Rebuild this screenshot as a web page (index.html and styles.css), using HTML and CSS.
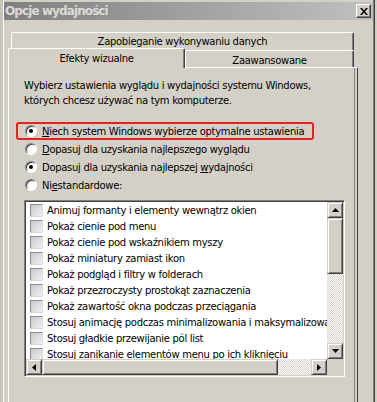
FILE: index.html
```html
<!DOCTYPE html>
<html lang="pl">
<head>
    <meta charset="UTF-8">
    <meta name="viewport" content="width=device-width, initial-scale=1.0">
    <title>Opcje wydajności</title>
    <link rel="stylesheet" href="styles.css">
</head>
<body>
    <div class="window">
        <div class="titlebar">
            <span class="title">Opcje wydajności</span>
            <span class="close-btn">
                <svg width="8" height="7" viewBox="0 0 8 7">
                    <path d="M0 0h2l2 2.5 2-2.5h2l-3 3.5 3 3.5h-2l-2-2.5-2 2.5h-2l3-3.5z" fill="#000"/>
                </svg>
            </span>
        </div>

        <div class="tabs">
            <div class="tab-row back">
                <div class="tab wide">Zapobieganie wykonywaniu danych</div>
            </div>
            <div class="tab-row front">
                <div class="tab active">Efekty wizualne</div>
                <div class="tab other">Zaawansowane</div>
            </div>
        </div>

        <div class="panel">
            <p class="intro">Wybierz ustawienia wyglądu i wydajności systemu Windows,<br>których chcesz używać na tym komputerze.</p>

            <div class="radios">
                <div class="radio marked"><span class="radio-dot on"></span><span><u>N</u>iech system Windows wybierze optymalne ustawienia</span></div>
                <div class="radio"><span class="radio-dot"></span><span><u>D</u>opasuj dla uzyskania najlepszego wyglądu</span></div>
                <div class="radio"><span class="radio-dot on"></span><span>Dopasuj dla uzyskania najlepszej <u>w</u>ydajności</span></div>
                <div class="radio"><span class="radio-dot"></span><span>Ni<u>e</u>standardowe:</span></div>
            </div>

            <div class="listbox">
                <div class="items">
                    <div class="item"><span class="check"></span>Animuj formanty i elementy wewnątrz okien</div>
                    <div class="item"><span class="check"></span>Pokaż cienie pod menu</div>
                    <div class="item"><span class="check"></span>Pokaż cienie pod wskaźnikiem myszy</div>
                    <div class="item"><span class="check"></span>Pokaż miniatury zamiast ikon</div>
                    <div class="item"><span class="check"></span>Pokaż podgląd i filtry w folderach</div>
                    <div class="item"><span class="check"></span>Pokaż przezroczysty prostokąt zaznaczenia</div>
                    <div class="item"><span class="check"></span>Pokaż zawartość okna podczas przeciągania</div>
                    <div class="item"><span class="check"></span>Stosuj animację podczas minimalizowania i maksymalizowania okien</div>
                    <div class="item"><span class="check"></span>Stosuj gładkie przewijanie pól list</div>
                    <div class="item"><span class="check"></span>Stosuj zanikanie elementów menu po ich kliknięciu</div>
                </div>

                <div class="vscroll">
                    <div class="sb-btn">
                        <svg width="7" height="4" viewBox="0 0 7 4"><path d="M3.5 0L7 4H0z" fill="#000"/></svg>
                    </div>
                    <div class="sb-thumb v"></div>
                    <div class="sb-track"></div>
                    <div class="sb-btn">
                        <svg width="7" height="4" viewBox="0 0 7 4"><path d="M0 0h7L3.5 4z" fill="#000"/></svg>
                    </div>
                </div>

                <div class="hscroll">
                    <div class="sb-btn">
                        <svg width="4" height="7" viewBox="0 0 4 7"><path d="M4 0v7L0 3.5z" fill="#000"/></svg>
                    </div>
                    <div class="sb-thumb h"></div>
                    <div class="sb-track"></div>
                    <div class="sb-btn">
                        <svg width="4" height="7" viewBox="0 0 4 7"><path d="M0 0l4 3.5L0 7z" fill="#000"/></svg>
                    </div>
                </div>

                <div class="corner"></div>
            </div>
        </div>
    </div>
</body>
</html>
```

FILE: styles.css
```css
* {
    margin: 0;
    padding: 0;
    box-sizing: border-box;
}

html, body {
    width: 377px;
    height: 402px;
    overflow: hidden;
}

body {
    background: #d4d0c8;
    font-family: "DejaVu Sans", sans-serif;
    font-size: 10px;
    letter-spacing: -0.3px;
    color: #000;
}

.window {
    height: 402px;
    padding-top: 2px;
    background: #d4d0c8;
    box-shadow:
        inset 3px 0 #c8c4bc,
        inset 4px 0 #ffffff,
        inset -2px 0 #d4d0c8,
        inset -3px 0 #404040,
        inset -4px 0 #808080;
}

/* Title bar */
.titlebar {
    height: 18px;
    margin: 0 4px;
    display: flex;
    align-items: center;
    justify-content: space-between;
    background: linear-gradient(90deg, #808080, #c0c0c0);
}

.title {
    padding-left: 1px;
    font-weight: bold;
    font-size: 12px;
    letter-spacing: -0.9px;
    color: #dcdad6;
}

.close-btn {
    width: 15px;
    height: 14px;
    margin-right: 2px;
    display: flex;
    align-items: center;
    justify-content: center;
    background: #d4d0c8;
    border: 1px solid;
    border-color: #ffffff #404040 #404040 #ffffff;
    box-shadow: inset -1px -1px #808080;
}

/* Tabs */
.tabs {
    margin: 12px 23px 0 8px;
}

.tab-row {
    display: flex;
}

.tab-row.back {
    padding-left: 3px;
}

.tab-row.front {
    margin-top: -2px;
    align-items: flex-start;
}

.tab {
    display: flex;
    align-items: center;
    justify-content: center;
    background: #d4d0c8;
    border-top: 1px solid #ffffff;
    border-left: 1px solid #ffffff;
    border-right: 1px solid #404040;
    border-radius: 2px 2px 0 0;
    box-shadow: inset -1px 0 #808080;
    white-space: nowrap;
}

.tab.wide {
    flex: 1;
    height: 18px;
}

.tab.active {
    position: relative;
    z-index: 2;
    width: 177px;
    height: 20px;
    padding-bottom: 1px;
}

.tab.other {
    flex: 1;
    height: 17px;
    margin-top: 2px;
    padding-top: 3px;
}

/* Panel */
.panel {
    width: 350px;
    height: 340px;
    margin: -1px 0 0 8px;
    padding: 10px 0 0 15px;
    border-top: 1px solid #ffffff;
    border-left: 1px solid #ffffff;
    border-right: 1px solid #404040;
    box-shadow: inset -2px 0 #d4d0c8, inset -3px 0 #808080;
}

.intro {
    line-height: 15px;
}

.radios {
    margin-top: 14px;
}

.radio {
    height: 18px;
    padding-left: 1px;
    display: flex;
    align-items: center;
    gap: 5px;
    white-space: nowrap;
}

.radio.marked {
    width: 298px;
    margin-left: -8px;
    padding-left: 7px;
    border: 2px solid #e2231e;
    border-radius: 3px;
}

.radio-dot {
    width: 12px;
    height: 12px;
    flex: none;
    border-radius: 50%;
    border: 1px solid;
    border-color: #808080 #ffffff #ffffff #808080;
    background: #ffffff;
    box-shadow: inset 1px 1px #404040;
    display: flex;
    align-items: center;
    justify-content: center;
}

.radio-dot.on::after {
    content: "";
    width: 4px;
    height: 4px;
    border-radius: 50%;
    background: #000;
}

u {
    text-underline-offset: 1px;
}

/* List box */
.listbox {
    width: 321px;
    height: 177px;
    margin-top: 6px;
    display: grid;
    grid-template-columns: 1fr 16px;
    grid-template-rows: 1fr 16px;
    background: #ffffff;
    border: 1px solid;
    border-color: #808080 #ffffff #ffffff #808080;
    box-shadow: inset 1px 1px #404040, inset -1px -1px #d4d0c8;
    padding: 1px;
}

.items {
    overflow: hidden;
    padding-left: 4px;
}

.item {
    height: 16px;
    display: flex;
    align-items: center;
    gap: 4px;
    white-space: nowrap;
}

.check {
    width: 13px;
    height: 13px;
    flex: none;
    border: 1px solid;
    border-color: #8c8c8c #dcdcdc #dcdcdc #8c8c8c;
    background: linear-gradient(135deg, #c9c9c9, #f0f0f0);
}

.vscroll {
    display: flex;
    flex-direction: column;
}

.hscroll {
    display: flex;
}

.sb-btn,
.sb-thumb {
    flex: none;
    background: #d4d0c8;
    border: 1px solid;
    border-color: #d4d0c8 #404040 #404040 #d4d0c8;
    box-shadow: inset 1px 1px #ffffff, inset -1px -1px #808080;
}

.sb-btn {
    width: 16px;
    height: 16px;
    display: flex;
    align-items: center;
    justify-content: center;
}

.sb-thumb.v {
    height: 56px;
}

.sb-thumb.h {
    width: 236px;
}

.sb-track {
    flex: 1;
    background: repeating-conic-gradient(#ffffff 0 25%, #d4d0c8 0 50%) 0 0 / 2px 2px;
}

.corner {
    background: #d4d0c8;
}
```
